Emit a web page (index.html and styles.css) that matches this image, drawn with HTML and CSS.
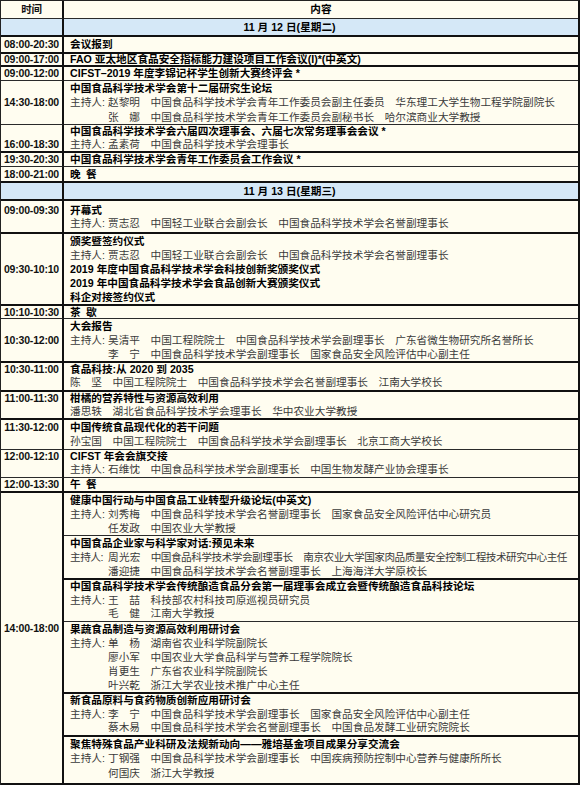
FILE: index.html
```html
<!DOCTYPE html>
<html lang="zh-CN">
<head>
<meta charset="utf-8">
<title>会议日程</title>
<link rel="stylesheet" href="styles.css">
</head>
<body>
<div class="sched">
  <div class="row b1 l17">
    <div class="t">时间</div>
    <div class="c mid ti">内容</div>
  </div>
  <div class="row date b2 l16">
    <div class="t"></div>
    <div class="c ti">11 月 12 日(星期二)</div>
  </div>
  <div class="row b2 l145">
    <div class="t">08:00-20:30</div>
    <div class="c"><div class="ti">会议报到</div></div>
  </div>
  <div class="row b2 l115">
    <div class="t">09:00-17:00</div>
    <div class="c"><div class="ti">FAO 亚太地区食品安全指标能力建设项目工作会议(I)*(中英文)</div></div>
  </div>
  <div class="row b1 l127">
    <div class="t">09:00-12:00</div>
    <div class="c"><div class="ti">CIFST–2019 年度李锦记杯学生创新大赛终评会 *</div></div>
  </div>
  <div class="row b1 l144">
    <div class="t">14:30-18:00</div>
    <div class="c">
      <div class="ti">中国食品科学技术学会第十二届研究生论坛</div>
      <div class="ln"><span class="lb">主持人:</span><span class="nm">赵黎明</span><span class="af">中国食品科学技术学会青年工作委员会副主任委员</span><span class="af">华东理工大学生物工程学院副院长</span></div>
      <div class="ln ind"><span class="nm">张娜</span><span class="af">中国食品科学技术学会青年工作委员会副秘书长</span><span class="af">哈尔滨商业大学教授</span></div>
    </div>
  </div>
  <div class="row b2 l13">
    <div class="t bot">16:00-18:30</div>
    <div class="c">
      <div class="ti">中国食品科学技术学会六届四次理事会、六届七次常务理事会会议 *</div>
      <div class="ln"><span class="lb">主持人:</span><span class="nm">孟素荷</span><span class="af">中国食品科学技术学会理事长</span></div>
    </div>
  </div>
  <div class="row b1 l127">
    <div class="t">19:30-20:30</div>
    <div class="c"><div class="ti">中国食品科学技术学会青年工作委员会工作会议 *</div></div>
  </div>
  <div class="row b2 l14">
    <div class="t">18:00-21:00</div>
    <div class="c"><div class="ti">晚&ensp;餐</div></div>
  </div>
  <div class="row date b2 l163">
    <div class="t"></div>
    <div class="c ti">11 月 13 日(星期三)</div>
  </div>
  <div class="row b2 l135 pt3">
    <div class="t top">09:00-09:30</div>
    <div class="c">
      <div class="ti">开幕式</div>
      <div class="ln"><span class="lb">主持人:</span><span class="nm">贾志忍</span><span class="af">中国轻工业联合会副会长</span><span class="af">中国食品科学技术学会名誉副理事长</span></div>
    </div>
  </div>
  <div class="row b2 l14">
    <div class="t">09:30-10:10</div>
    <div class="c">
      <div class="ti">颁奖暨签约仪式</div>
      <div class="ln"><span class="lb">主持人:</span><span class="nm">贾志忍</span><span class="af">中国轻工业联合会副会长</span><span class="af">中国食品科学技术学会名誉副理事长</span></div>
      <div class="ti">2019 年度中国食品科学技术学会科技创新奖颁奖仪式</div>
      <div class="ti">2019 年中国食品科学技术学会食品创新大赛颁奖仪式</div>
      <div class="ti">科企对接签约仪式</div>
    </div>
  </div>
  <div class="row b1 l12">
    <div class="t">10:10-10:30</div>
    <div class="c"><div class="ti">茶&ensp;歇</div></div>
  </div>
  <div class="row b2 l14">
    <div class="t">10:30-12:00</div>
    <div class="c">
      <div class="ti">大会报告</div>
      <div class="ln"><span class="lb">主持人:</span><span class="nm">吴清平</span><span class="af">中国工程院院士</span><span class="af">中国食品科学技术学会副理事长</span><span class="af">广东省微生物研究所名誉所长</span></div>
      <div class="ln ind"><span class="nm">李宁</span><span class="af">中国食品科学技术学会副理事长</span><span class="af">国家食品安全风险评估中心副主任</span></div>
    </div>
  </div>
  <div class="row b2 l13 pb1">
    <div class="t top">10:30-11:00</div>
    <div class="c">
      <div class="ti">食品科技:从 2020 到 2035</div>
      <div class="ln"><span class="nm">陈坚</span><span class="af">中国工程院院士</span><span class="af">中国食品科学技术学会名誉副理事长</span><span class="af">江南大学校长</span></div>
    </div>
  </div>
  <div class="row b2 l13">
    <div class="t top">11:00-11:30</div>
    <div class="c">
      <div class="ti">柑橘的营养特性与资源高效利用</div>
      <div class="ln"><span class="nm">潘思轶</span><span class="af">湖北省食品科学技术学会理事长</span><span class="af">华中农业大学教授</span></div>
    </div>
  </div>
  <div class="row b1 l145">
    <div class="t top">11:30-12:00</div>
    <div class="c">
      <div class="ti">中国传统食品现代化的若干问题</div>
      <div class="ln"><span class="nm">孙宝国</span><span class="af">中国工程院院士</span><span class="af">中国食品科学技术学会副理事长</span><span class="af">北京工商大学校长</span></div>
    </div>
  </div>
  <div class="row b1 l135">
    <div class="t top">12:00-12:10</div>
    <div class="c">
      <div class="ti">CIFST 年会会旗交接</div>
      <div class="ln"><span class="lb">主持人:</span><span class="nm">石维忱</span><span class="af">中国食品科学技术学会副理事长</span><span class="af">中国生物发酵产业协会理事长</span></div>
    </div>
  </div>
  <div class="row b2 l13">
    <div class="t">12:00-13:30</div>
    <div class="c"><div class="ti">午&ensp;餐</div></div>
  </div>

  <div class="t span6">14:00-18:00</div>
  <div class="row b1 l14">
    <div class="c">
      <div class="ti">健康中国行动与中国食品工业转型升级论坛(中英文)</div>
      <div class="ln"><span class="lb">主持人:</span><span class="nm">刘秀梅</span><span class="af">中国食品科学技术学会名誉副理事长</span><span class="af">国家食品安全风险评估中心研究员</span></div>
      <div class="ln ind"><span class="nm">任发政</span><span class="af">中国农业大学教授</span></div>
    </div>
  </div>
  <div class="row b2 l14">
    <div class="c">
      <div class="ti">中国食品企业家与科学家对话:预见未来</div>
      <div class="ln cd"><span class="lb">主持人:</span><span class="nm">周光宏</span><span class="af">中国食品科学技术学会副理事长</span><span class="af">南京农业大学国家肉品质量安全控制工程技术研究中心主任</span></div>
      <div class="ln ind"><span class="nm">潘迎捷</span><span class="af">中国食品科学技术学会名誉副理事长</span><span class="af">上海海洋大学原校长</span></div>
    </div>
  </div>
  <div class="row b1 l137">
    <div class="c">
      <div class="ti">中国食品科学技术学会传统酿造食品分会第一届理事会成立会暨传统酿造食品科技论坛</div>
      <div class="ln"><span class="lb">主持人:</span><span class="nm">王喆</span><span class="af">科技部农村科技司原巡视员研究员</span></div>
      <div class="ln ind"><span class="nm">毛健</span><span class="af">江南大学教授</span></div>
    </div>
  </div>
  <div class="row b2 l14">
    <div class="c">
      <div class="ti">果蔬食品制造与资源高效利用研讨会</div>
      <div class="ln"><span class="lb">主持人:</span><span class="nm">单杨</span><span class="af">湖南省农业科学院副院长</span></div>
      <div class="ln ind"><span class="nm">廖小军</span><span class="af">中国农业大学食品科学与营养工程学院院长</span></div>
      <div class="ln ind"><span class="nm">肖更生</span><span class="af">广东省农业科学院副院长</span></div>
      <div class="ln ind"><span class="nm">叶兴乾</span><span class="af">浙江大学农业技术推广中心主任</span></div>
    </div>
  </div>
  <div class="row b2 l135">
    <div class="c">
      <div class="ti">新食品原料与食药物质创新应用研讨会</div>
      <div class="ln"><span class="lb">主持人:</span><span class="nm">李宁</span><span class="af">中国食品科学技术学会副理事长</span><span class="af">国家食品安全风险评估中心副主任</span></div>
      <div class="ln ind"><span class="nm">蔡木易</span><span class="af">中国食品科学技术学会名誉副理事长</span><span class="af">中国食品发酵工业研究院院长</span></div>
    </div>
  </div>
  <div class="row b2 l145 pb3">
    <div class="c">
      <div class="ti">聚焦特殊食品产业科研及法规新动向——雅培基金项目成果分享交流会</div>
      <div class="ln"><span class="lb">主持人:</span><span class="nm">丁钢强</span><span class="af">中国食品科学技术学会副理事长</span><span class="af">中国疾病预防控制中心营养与健康所所长</span></div>
      <div class="ln ind"><span class="nm">何国庆</span><span class="af">浙江大学教授</span></div>
    </div>
  </div>
</div>
</body>
</html>
```

FILE: styles.css
```css
* {
  box-sizing: border-box;
  margin: 0;
  padding: 0;
}

html, body {
  background: #ffffff;
}

body {
  margin: 0;
  font-family: "Liberation Sans", "Noto Sans CJK SC", sans-serif;
  font-size: 10.65px;
  color: #3a3a3a;
}

.sched {
  display: grid;
  grid-template-columns: 63px 514px;
  width: 580px;
  border-top: 1px solid #222;
  border-left: 1px solid #222;
  border-right: 2px solid #111;
  background: #fffdf0;
}

.row {
  display: contents;
}

.t {
  grid-column: 1;
  display: flex;
  align-items: center;
  justify-content: center;
  border-right: 2px solid #111;
  font-family: "Liberation Sans", "Noto Sans CJK SC", sans-serif;
  font-size: 10.5px;
  font-weight: 700;
  letter-spacing: -0.2px;
  color: #111;
  white-space: nowrap;
}

.t.top {
  align-items: flex-start;
}

.t.bot {
  align-items: flex-end;
}

.t.span6 {
  grid-row: span 6;
  line-height: 14px;
  padding-bottom: 20px;
  border-bottom: 2px solid #111;
}

.c {
  grid-column: 2;
  padding-left: 6px;
  line-height: 14px;
  white-space: nowrap;
  overflow: hidden;
}

.c.mid {
  padding-left: 0;
  text-align: center;
}

.date > * {
  background: #d5e8f7;
}

.date .c {
  padding-left: 0;
  padding-right: 63px;
  text-align: center;
}

.ti {
  font-weight: 700;
  color: #000;
}

.ln {
  color: #3a3a3a;
}

.ln.ind {
  padding-left: 38px;
}

.ln.cd {
  letter-spacing: -0.5px;
}

.lb {
  display: inline-block;
  width: 38px;
}

.nm {
  display: inline-block;
  width: 3em;
  margin-right: 1em;
  text-align: justify;
  text-align-last: justify;
}

.cd .nm {
  width: 32px;
  margin-right: 10.7px;
}

.af + .af {
  margin-left: 1em;
}

/* row borders */
.b1 > * {
  border-bottom: 1px solid #2a2a2a;
}

.b2 > * {
  border-bottom: 2px solid #111;
}

/* row line heights */
.l115 > * { line-height: 11.5px; }
.l12 > * { line-height: 12px; }
.l127 > * { line-height: 12.7px; }
.l13 > * { line-height: 13px; }
.l135 > * { line-height: 13.5px; }
.l137 > * { line-height: 13.7px; }
.l14 > * { line-height: 14px; }
.l144 > * { line-height: 14.4px; }
.l145 > * { line-height: 14.5px; }
.l16 > * { line-height: 16px; }
.l163 > * { line-height: 16.3px; }
.l17 > * { line-height: 17px; }

/* row paddings */
.pt3 > * {
  padding-top: 3px;
  padding-bottom: 0.7px;
}

.pb1 > .c {
  padding-bottom: 1.3px;
}

.pb3 > .c {
  padding-bottom: 2.6px;
}
```
